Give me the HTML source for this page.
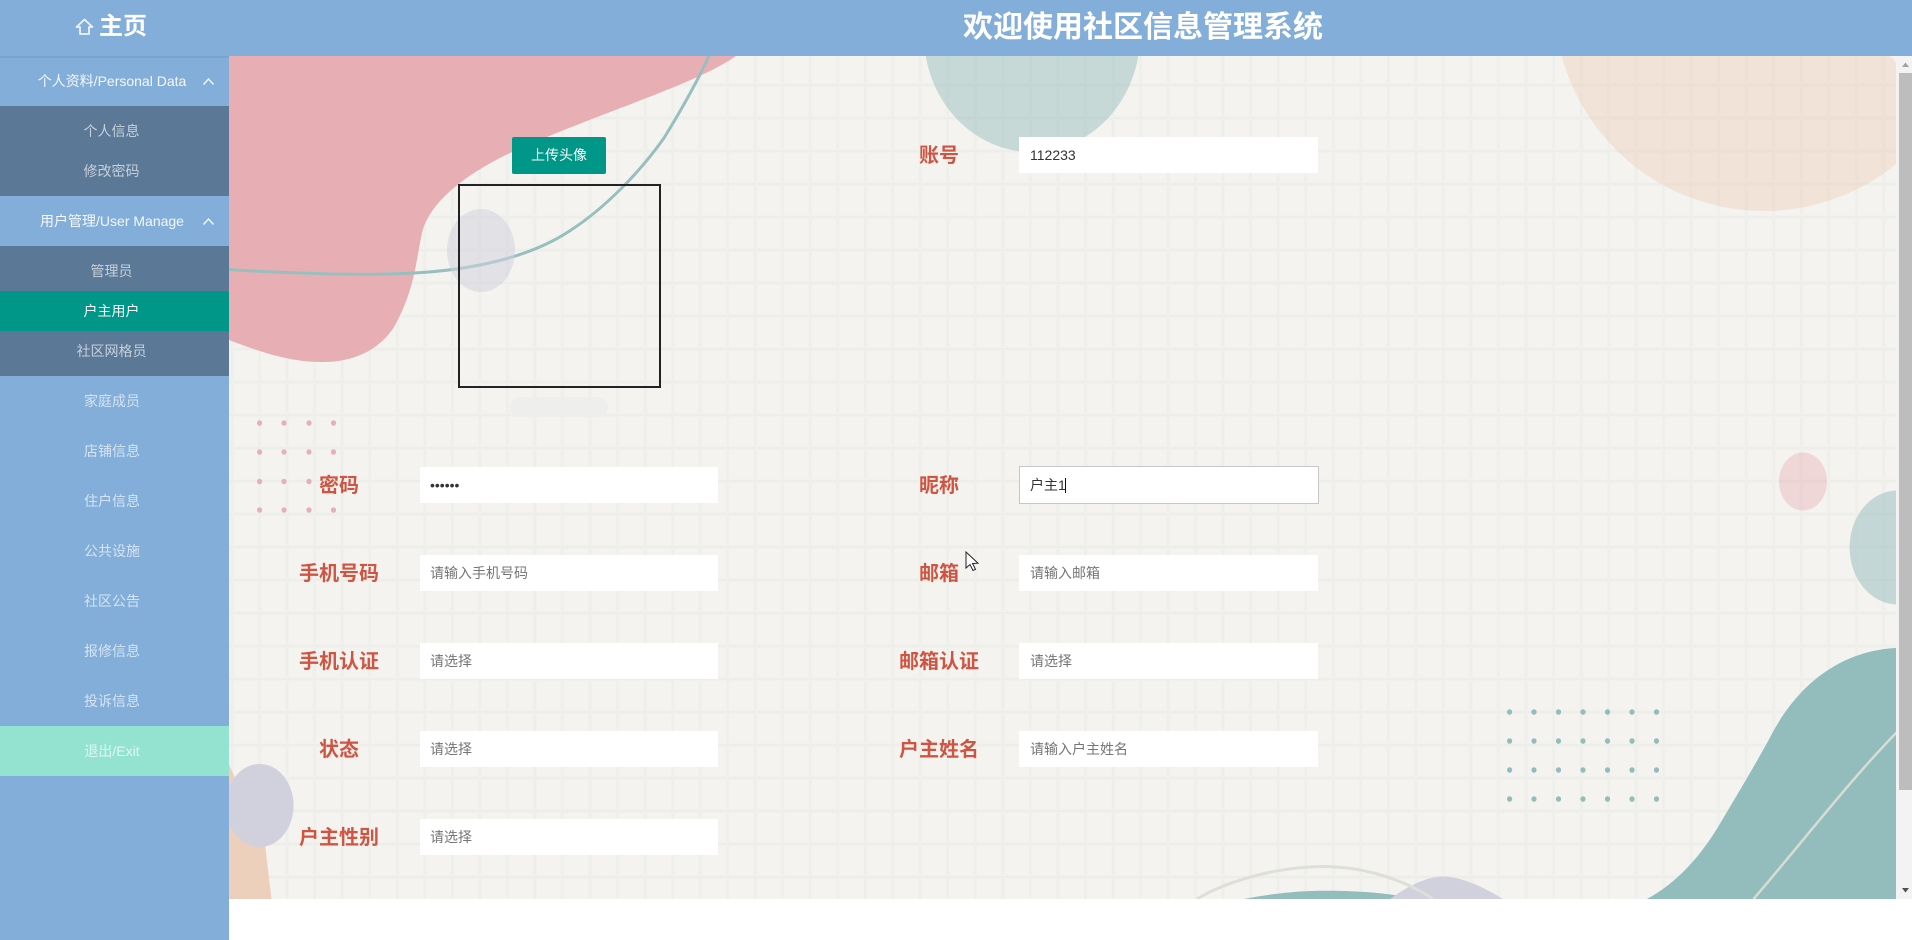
<!DOCTYPE html>
<html lang="zh"><head><meta charset="utf-8"><title>社区信息管理系统</title>
<style>
*{box-sizing:border-box}
html,body{margin:0;padding:0;width:1912px;height:940px;overflow:hidden;background:#fff;font-family:"Liberation Sans","Noto Sans CJK SC",sans-serif}
.abs{position:absolute}
#hd{position:absolute;left:0;top:0;width:1912px;height:56px;background:#82aed9;z-index:5}
#side{position:absolute;left:0;top:56px;width:229px;height:884px;background:#82aed9;z-index:4}
#side:before{content:"";position:absolute;left:0;top:0;width:229px;height:2px;background:#78a4cf}
.m{position:absolute;left:0;width:229px;height:50px;line-height:50px;font-size:14px;color:#d6e4f2;padding-right:5px;text-align:center}
.t{color:#f4f8fc}
.s{position:absolute;left:0;width:229px;background:#5b7896}
.i{position:absolute;left:0;width:229px;height:40px;line-height:40px;font-size:14px;color:#c6d0da;padding-right:6px;text-align:center}
.a{background:#009688;color:#f3fbfa}
.x{background:#93e3d0;color:#e2f6f1}
.l{position:absolute;width:160px;height:36px;line-height:38px;text-align:center;font-size:20px;font-weight:700;color:#cf5442}
input{position:absolute;width:298px;height:36px;border:1px solid #fff;background:#fff;padding:0 9px;font-size:14px;color:#333;outline:0;border-radius:0;font-family:"Liberation Sans","Noto Sans CJK SC",sans-serif}
input.r{left:1019px;width:299px;padding:0 10px}
input::placeholder{color:#757575;opacity:1}
</style></head>
<body>
<svg class="abs" style="left:0;top:0;z-index:1" width="1912" height="940" viewBox="0 0 1912 940" xmlns="http://www.w3.org/2000/svg">
<defs>
<pattern id="g" patternUnits="userSpaceOnUse" x="230" y="50" width="27.53" height="33">
<rect width="27.53" height="33" fill="#f4f3f0"/>
<rect x="0" y="0" width="4" height="33" fill="#f1f1ed"/>
<rect x="1" y="0" width="2" height="33" fill="#eeeeea"/>
<rect x="0" y="0" width="27.53" height="4" fill="#f1f1ed"/>
<rect x="0" y="1" width="27.53" height="2.2" fill="#ededE9"/>
</pattern>
<clipPath id="c"><rect x="229" y="56" width="1667" height="843"/></clipPath>
<clipPath id="cp"><rect x="1500" y="56" width="396" height="300" rx="9"/></clipPath>
</defs>
<g clip-path="url(#c)">
<rect x="229" y="56" width="1668" height="843" fill="url(#g)"/>
<g clip-path="url(#cp)"><circle cx="1764" cy="1.5" r="209.5" fill="#eecbb4" opacity=".4"/></g>
<ellipse cx="1032" cy="35" rx="108" ry="117" fill="#93bcbc" opacity=".47"/>
<path d="M229,56 L736,56 C695,85 600,112 510,153 C470,172 430,200 422,233 C416,260 415,290 394,327 C378,352 350,363 320,362 C288,362 255,350 229,340 Z" fill="#e7afb4"/>
<path d="M229,269.5 C280,273 360,276 414,273 C470,270 530,258 571,230 C605,208 640,172 664,138 C680,112 697,82 709,56" fill="none" stroke="#97bfbe" stroke-width="3"/>
<ellipse cx="481" cy="250.5" rx="34" ry="41.5" fill="#d1d1de" opacity=".55"/>
<ellipse cx="1803" cy="481.5" rx="24" ry="29" fill="#e7afb4" opacity=".42"/>
<ellipse cx="1897.6" cy="547.5" rx="48" ry="57" fill="#93bcbc" opacity=".5"/>
<path d="M229,764 C238,785 250,815 265,844 L271.5,899 L229,899 Z" fill="#edd0bc"/>
<ellipse cx="259.6" cy="805.5" rx="34" ry="41.5" fill="#d1d1de"/>
<path d="M1897,648 C1850,650 1805,675 1774,730 C1757,762 1740,790 1721,822 C1700,858 1675,884 1647,899 L1897,899 Z" fill="#93bcbc"/>
<path d="M1897,732 C1850,780 1800,845 1753.5,899" fill="none" stroke="#d8dcd4" stroke-width="2.5"/>
<path d="M1244,899 C1275,893 1300,890.7 1325,890.7 C1352,890.7 1378,892 1400,896 L1412,899 Z" fill="#93bcbc"/>
<path d="M1390,899 C1405,888 1425,876.5 1443,876.5 C1462,876.5 1485,888 1503,899 Z" fill="#d1d1de"/>
<path d="M1197,899 C1225,882 1275,866.5 1325,866.5 C1365,867 1405,880 1433,899" fill="none" stroke="#dedfd8" stroke-width="3"/>
<g fill="#93bcbc">
<ellipse cx="1509.6" cy="712" rx="2.6" ry="2.8"/><ellipse cx="1534" cy="712" rx="2.6" ry="2.8"/><ellipse cx="1558.5" cy="712" rx="2.6" ry="2.8"/><ellipse cx="1583" cy="712" rx="2.6" ry="2.8"/><ellipse cx="1607.5" cy="712" rx="2.6" ry="2.8"/><ellipse cx="1632" cy="712" rx="2.6" ry="2.8"/><ellipse cx="1656.5" cy="712" rx="2.6" ry="2.8"/>
<ellipse cx="1509.6" cy="741" rx="2.6" ry="2.8"/><ellipse cx="1534" cy="741" rx="2.6" ry="2.8"/><ellipse cx="1558.5" cy="741" rx="2.6" ry="2.8"/><ellipse cx="1583" cy="741" rx="2.6" ry="2.8"/><ellipse cx="1607.5" cy="741" rx="2.6" ry="2.8"/><ellipse cx="1632" cy="741" rx="2.6" ry="2.8"/><ellipse cx="1656.5" cy="741" rx="2.6" ry="2.8"/>
<ellipse cx="1509.6" cy="770" rx="2.6" ry="2.8"/><ellipse cx="1534" cy="770" rx="2.6" ry="2.8"/><ellipse cx="1558.5" cy="770" rx="2.6" ry="2.8"/><ellipse cx="1583" cy="770" rx="2.6" ry="2.8"/><ellipse cx="1607.5" cy="770" rx="2.6" ry="2.8"/><ellipse cx="1632" cy="770" rx="2.6" ry="2.8"/><ellipse cx="1656.5" cy="770" rx="2.6" ry="2.8"/>
<ellipse cx="1509.6" cy="799" rx="2.6" ry="2.8"/><ellipse cx="1534" cy="799" rx="2.6" ry="2.8"/><ellipse cx="1558.5" cy="799" rx="2.6" ry="2.8"/><ellipse cx="1583" cy="799" rx="2.6" ry="2.8"/><ellipse cx="1607.5" cy="799" rx="2.6" ry="2.8"/><ellipse cx="1632" cy="799" rx="2.6" ry="2.8"/><ellipse cx="1656.5" cy="799" rx="2.6" ry="2.8"/>
</g>
<g fill="#e5b0bc">
<ellipse cx="259.6" cy="423" rx="2.6" ry="2.8"/><ellipse cx="284" cy="423" rx="2.6" ry="2.8"/><ellipse cx="309" cy="423" rx="2.6" ry="2.8"/><ellipse cx="333.5" cy="423" rx="2.6" ry="2.8"/>
<ellipse cx="259.6" cy="452" rx="2.6" ry="2.8"/><ellipse cx="284" cy="452" rx="2.6" ry="2.8"/><ellipse cx="309" cy="452" rx="2.6" ry="2.8"/><ellipse cx="333.5" cy="452" rx="2.6" ry="2.8"/>
<ellipse cx="259.6" cy="481.5" rx="2.6" ry="2.8"/><ellipse cx="284" cy="481.5" rx="2.6" ry="2.8"/><ellipse cx="309" cy="481.5" rx="2.6" ry="2.8"/>
<ellipse cx="259.6" cy="510" rx="2.6" ry="2.8"/><ellipse cx="284" cy="510" rx="2.6" ry="2.8"/><ellipse cx="309" cy="510" rx="2.6" ry="2.8"/><ellipse cx="333.5" cy="510" rx="2.6" ry="2.8"/>
</g>
</g>
<rect x="1896" y="56" width="16" height="843" fill="#f3f3f3"/>
<rect x="1899" y="73" width="13" height="717" fill="#bdbdbd"/>
<path d="M1905.5,62.5 L1902,67 L1909,67 Z" fill="#a3a3a3"/>
<path d="M1902,888 L1909,888 L1905.5,892.5 Z" fill="#505050"/>
</svg>

<div id="hd">
<svg class="abs" style="left:74px;top:17px" width="22" height="20" viewBox="0 0 22 20"><path d="M10.5,2.5 L2.5,10 L6,10 L6,17 L15,17 L15,10 L18.5,10 Z" fill="none" stroke="#eaf4fb" stroke-width="1.8" stroke-linejoin="round"/></svg>
<div class="abs" style="left:99px;top:10px;font-size:24px;line-height:34px;font-weight:700;color:#fff">主页</div>
<div class="abs" style="left:963px;top:10px;font-size:30px;line-height:36px;font-weight:700;color:#fff;white-space:nowrap">欢迎使用社区信息管理系统</div>
</div>

<div id="side">
<div class="m t" style="top:0">个人资料/Personal Data</div>
<svg class="abs" style="left:202px;top:21px" width="13" height="9" viewBox="0 0 13 9"><path d="M1.5,7.5 L6.5,2 L11.5,7.5" fill="none" stroke="#f4f8fc" stroke-width="1.4"/></svg>
<div class="s" style="top:50px;height:90px">
<div class="i" style="top:5px">个人信息</div>
<div class="i" style="top:45px">修改密码</div>
</div>
<div class="m t" style="top:140px">用户管理/User Manage</div>
<svg class="abs" style="left:202px;top:161px" width="13" height="9" viewBox="0 0 13 9"><path d="M1.5,7.5 L6.5,2 L11.5,7.5" fill="none" stroke="#f4f8fc" stroke-width="1.4"/></svg>
<div class="s" style="top:190px;height:130px">
<div class="i" style="top:5px">管理员</div>
<div class="i a" style="top:45px">户主用户</div>
<div class="i" style="top:85px">社区网格员</div>
</div>
<div class="m" style="top:320px">家庭成员</div>
<div class="m" style="top:370px">店铺信息</div>
<div class="m" style="top:420px">住户信息</div>
<div class="m" style="top:470px">公共设施</div>
<div class="m" style="top:520px">社区公告</div>
<div class="m" style="top:570px">报修信息</div>
<div class="m" style="top:620px">投诉信息</div>
<div class="m x" style="top:670px">退出/Exit</div>
</div>

<div style="position:absolute;left:0;top:0;width:1912px;height:940px;z-index:2">
<div class="abs" style="left:512px;top:137px;width:94px;height:37px;line-height:37px;background:#009688;border-radius:2px;color:#fff;font-size:14px;text-align:center">上传头像</div>
<div class="abs" style="left:457.5px;top:184px;width:203.5px;height:203.5px;border:2px solid #222"></div>
<div class="abs" style="left:510px;top:397px;width:98px;height:20px;background:#eeeeec;border-radius:10px"></div>

<div class="l" style="left:859px;top:137px">账号</div>
<input class="r" style="top:137px" value="112233">
<div class="l" style="left:259px;top:467px">密码</div>
<input type="password" style="left:420px;top:467px" value="123456">
<div class="l" style="left:859px;top:467px">昵称</div>
<input class="r" style="top:466px;height:38px;width:300px;border-color:#c6c6c6" value="户主1">
<div class="abs" style="left:1065px;top:478px;width:1px;height:15px;background:#111"></div>
<div class="l" style="left:259px;top:555px">手机号码</div>
<input style="left:420px;top:555px" placeholder="请输入手机号码">
<div class="l" style="left:859px;top:555px">邮箱</div>
<input class="r" style="top:555px" placeholder="请输入邮箱">
<div class="l" style="left:259px;top:643px">手机认证</div>
<input style="left:420px;top:643px" placeholder="请选择">
<div class="l" style="left:859px;top:643px">邮箱认证</div>
<input class="r" style="top:643px" placeholder="请选择">
<div class="l" style="left:259px;top:731px">状态</div>
<input style="left:420px;top:731px" placeholder="请选择">
<div class="l" style="left:859px;top:731px">户主姓名</div>
<input class="r" style="top:731px" placeholder="请输入户主姓名">
<div class="l" style="left:259px;top:819px">户主性别</div>
<input style="left:420px;top:819px" placeholder="请选择">
<svg class="abs" style="left:961px;top:548px" width="22" height="26" viewBox="0 0 22 26"><path d="M5,4 L5,20 L9,16.5 L12,22.5 L14.5,21.3 L11.5,15.5 L17,15.2 Z" fill="#fff" stroke="#222" stroke-width="1"/></svg>
</div>
</body></html>
